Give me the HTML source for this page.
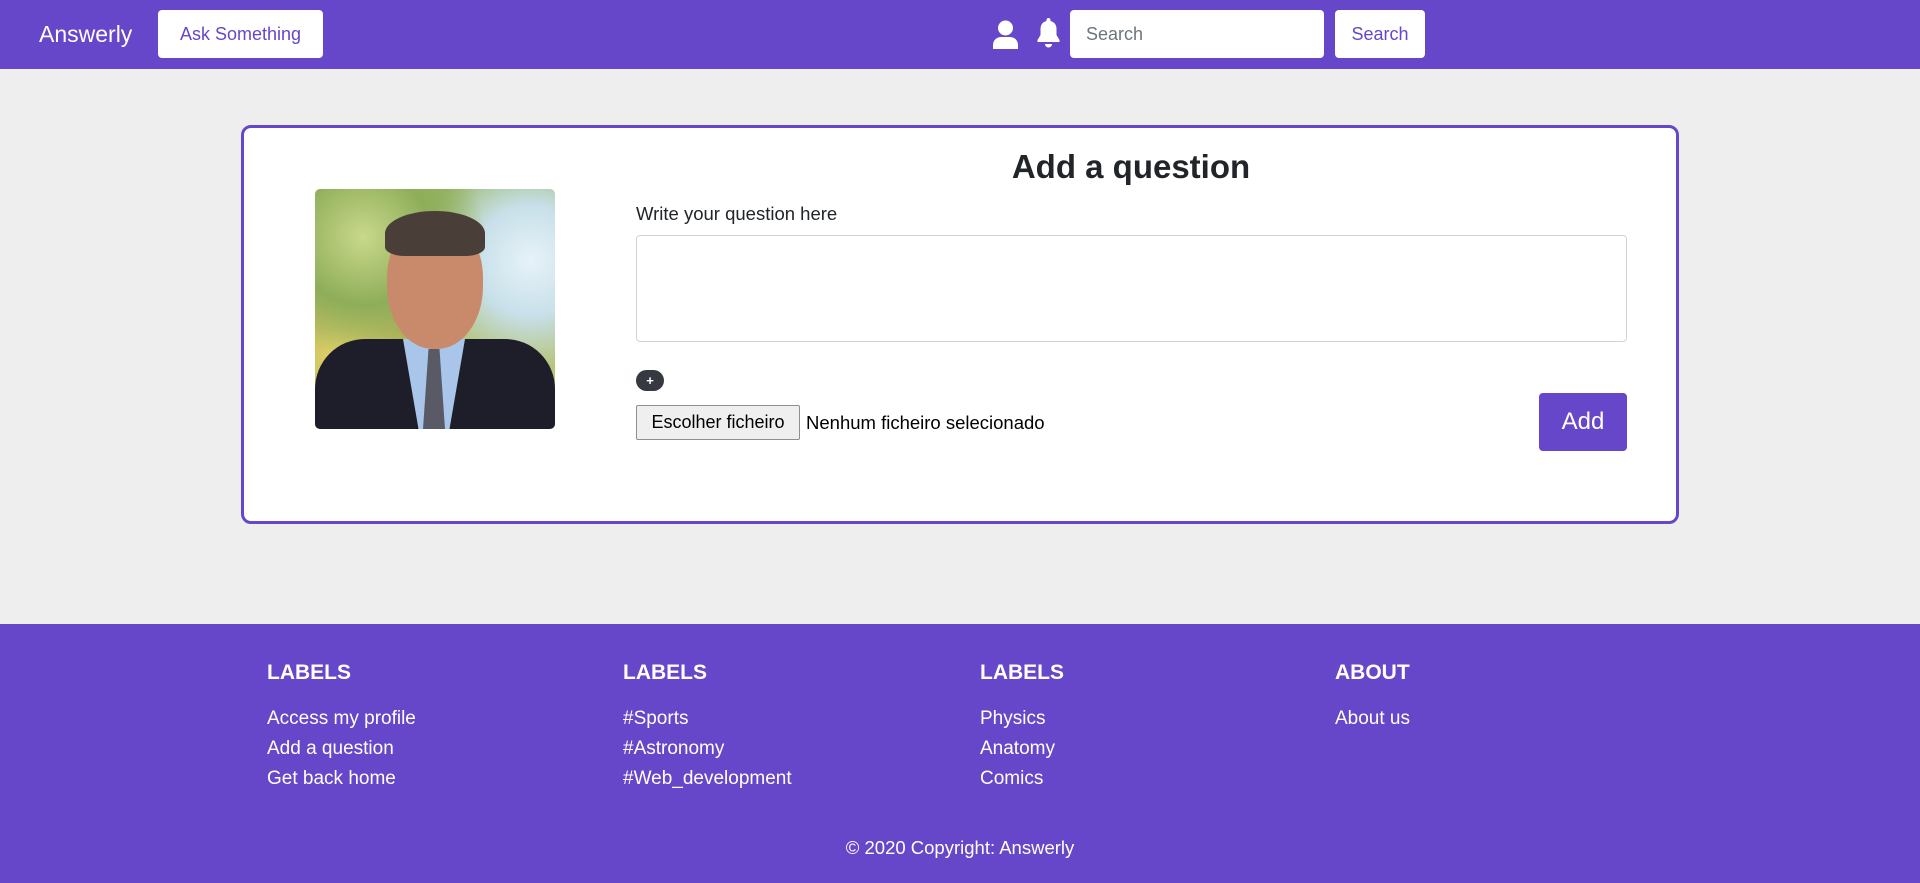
<!DOCTYPE html>
<html><head><meta charset="utf-8"><style>
*{box-sizing:border-box;margin:0;padding:0}
body{width:1920px;height:883px;background:#eeeeee;font-family:"Liberation Sans",sans-serif;position:relative;overflow:hidden;color:#212529}
.abs{position:absolute}
.nav{left:0;top:0;width:1920px;height:69px;background:#6646c9}
.btnw{background:#fff;border-radius:4px;color:#6646c9;font-size:18px;display:flex;align-items:center;justify-content:center}
.card{left:241px;top:125px;width:1438px;height:399px;background:#fff;border:3px solid #6646c9;border-radius:10px}
.foot{left:0;top:624px;width:1920px;height:259px;background:#6646c9;color:#fff}
.fh{font-weight:bold;font-size:21px;top:37px}
.fl{font-size:19px;line-height:30px;top:80px}
</style></head><body>
<div class="abs nav">
  <div class="abs" style="left:39px;top:21px;color:#fff;font-size:23px">Answerly</div>
  <div class="abs btnw" style="left:158px;top:10px;width:165px;height:48px">Ask Something</div>
  <svg class="abs" style="left:993px;top:20px" width="25" height="29" viewBox="0 0 25 29"><circle cx="12.5" cy="8" r="7.5" fill="#fff"/><path d="M0 29v-4c0-5 4-8 8-8h9c4 0 8 3 8 8v4z" fill="#fff"/></svg>
  <svg class="abs" style="left:1036px;top:18px" width="25" height="30" viewBox="0 0 25 30"><path d="M12.5 0c1.3 0 2 1 2 2v1c4 1 6 4 6 8v6l3 5v2H1.5v-2l3-5v-6c0-4 2-7 6-8V2c0-1 .7-2 2-2z" fill="#fff"/><path d="M9 26h7c0 2-1.5 3.5-3.5 3.5S9 28 9 26z" fill="#fff"/></svg>
  <div class="abs" style="left:1070px;top:10px;width:254px;height:48px;background:#fff;border-radius:4px;color:#6c757d;font-size:18px;padding:14px 16px">Search</div>
  <div class="abs btnw" style="left:1335px;top:10px;width:90px;height:48px">Search</div>
</div>
<div class="abs card">
  <div class="abs" style="left:71px;top:61px;width:240px;height:240px;border-radius:5px;overflow:hidden;background:radial-gradient(circle at 20% 20%,#c9d88a 0,#8eae5a 25%,transparent 45%),radial-gradient(circle at 90% 30%,#e7f2f8 0,#c8e0ea 20%,transparent 40%),radial-gradient(circle at 10% 70%,#e3d36a 0,#b8b45a 25%,transparent 45%),linear-gradient(#9ab86a,#c0c878)">
    <div class="abs" style="left:0;top:150px;width:240px;height:90px;background:#1e1e2a;border-radius:50px 50px 0 0"></div>
    <div class="abs" style="left:88px;top:150px;width:62px;height:90px;background:#a9c6ea;clip-path:polygon(0 0,100% 0,75% 100%,25% 100%)"></div>
    <div class="abs" style="left:108px;top:160px;width:22px;height:80px;background:#5a5a66;clip-path:polygon(25% 0,75% 0,100% 100%,0 100%)"></div>
    <div class="abs" style="left:72px;top:30px;width:96px;height:130px;background:#c98a6c;border-radius:45% 45% 48% 48%"></div>
    <div class="abs" style="left:70px;top:22px;width:100px;height:45px;background:#4a3e38;border-radius:50% 50% 20% 20%"></div>
  </div>
  <div class="abs" style="left:587px;width:600px;top:20px;text-align:center;font-size:33px;font-weight:600;color:#212529">Add a question</div>
  <div class="abs" style="left:392px;top:75px;font-size:18.5px">Write your question here</div>
  <div class="abs" style="left:392px;top:107px;width:991px;height:107px;border:1px solid #ced4da;border-radius:4px"></div>
  <div class="abs" style="left:392px;top:242px;width:28px;height:21px;background:#343a40;border-radius:11px;color:#fff;font-size:13px;text-align:center;line-height:21px;font-weight:bold">+</div>
  <div class="abs" style="left:392px;top:277px;width:164px;height:35px;background:#efefef;border:1px solid #8f8f8f;border-radius:2px;font-size:18px;text-align:center;line-height:33px;color:#000">Escolher ficheiro</div>
  <div class="abs" style="left:562px;top:284px;font-size:18.5px;color:#000">Nenhum ficheiro selecionado</div>
  <div class="abs" style="left:1295px;top:265px;width:88px;height:58px;background:#6646c9;border-radius:4px;color:#fff;font-size:24px;text-align:center;line-height:58px">Add</div>
</div>
<div class="abs foot">
  <div class="abs fh" style="left:267px">LABELS</div>
  <div class="abs fh" style="left:623px">LABELS</div>
  <div class="abs fh" style="left:980px">LABELS</div>
  <div class="abs fh" style="left:1335px">ABOUT</div>
  <div class="abs fl" style="left:267px">Access my profile<br>Add a question<br>Get back home</div>
  <div class="abs fl" style="left:623px">#Sports<br>#Astronomy<br>#Web_development</div>
  <div class="abs fl" style="left:980px">Physics<br>Anatomy<br>Comics</div>
  <div class="abs fl" style="left:1335px">About us</div>
  <div class="abs" style="left:0;width:1920px;top:213px;text-align:center;font-size:18.5px">© 2020 Copyright: Answerly</div>
</div>
</body></html>
